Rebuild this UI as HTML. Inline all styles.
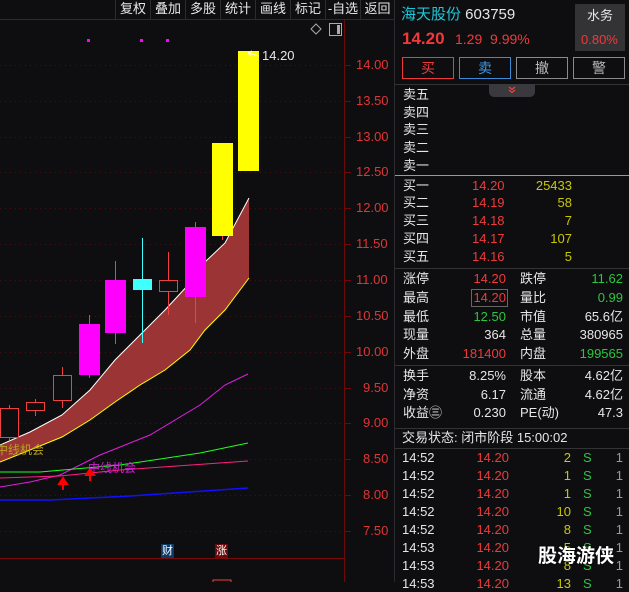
<!DOCTYPE html>
<html><head><meta charset="utf-8"><style>
*{margin:0;padding:0;box-sizing:border-box}
body{width:629px;height:582px;background:#0e0e11;overflow:hidden;position:relative;font-family:"Liberation Sans","Noto Sans CJK SC",sans-serif;font-size:13px;color:#e6e6e6}
.a{position:absolute;white-space:nowrap;line-height:16px}
.r{color:#f03a3a}.g{color:#2cc63c}.y{color:#c8c800}.w{color:#e6e6e6}.gr{color:#9a9a9a}
.tb{position:absolute;top:0;height:19px;line-height:18px;font-size:13px;color:#e6e6e6;border-left:1px solid #2c2c30;text-align:center}
.btn{position:absolute;top:57px;height:22px;width:52px;text-align:center;line-height:20px;font-size:14px}
.ax{position:absolute;left:356px;color:#e03535;font-size:13px;line-height:14px}
</style></head><body>
<div style="position:absolute;left:0;top:19px;width:394px;height:1px;background:#2c2c30"></div>
<div class="tb" style="left:115px;width:35px">复权</div>
<div class="tb" style="left:150px;width:35px">叠加</div>
<div class="tb" style="left:185px;width:35px">多股</div>
<div class="tb" style="left:220px;width:35px">统计</div>
<div class="tb" style="left:255px;width:35px">画线</div>
<div class="tb" style="left:290px;width:35px">标记</div>
<div class="tb" style="left:325px;width:35px">-自选</div>
<div class="tb" style="left:360px;width:34px">返回</div>
<div style="position:absolute;left:394px;top:0;width:1px;height:582px;background:#2c2c30"></div>

<svg style="position:absolute;left:0;top:0" width="394" height="582">
<g stroke="#4a1010" stroke-dasharray="1 4" stroke-width="1">
<line x1="0" y1="65.5" x2="344" y2="65.5"/><line x1="0" y1="101.5" x2="344" y2="101.5"/><line x1="0" y1="137.5" x2="344" y2="137.5"/><line x1="0" y1="172.5" x2="344" y2="172.5"/><line x1="0" y1="208.5" x2="344" y2="208.5"/><line x1="0" y1="244.5" x2="344" y2="244.5"/><line x1="0" y1="280.5" x2="344" y2="280.5"/><line x1="0" y1="316.5" x2="344" y2="316.5"/><line x1="0" y1="352.5" x2="344" y2="352.5"/><line x1="0" y1="388.5" x2="344" y2="388.5"/><line x1="0" y1="423.5" x2="344" y2="423.5"/><line x1="0" y1="459.5" x2="344" y2="459.5"/><line x1="0" y1="495.5" x2="344" y2="495.5"/><line x1="0" y1="531.5" x2="344" y2="531.5"/>
</g>
<line x1="344.5" y1="20" x2="344.5" y2="582" stroke="#6a0a0a"/>
<g stroke="#6a0a0a"><line x1="345" y1="65.5" x2="351" y2="65.5"/><line x1="345" y1="101.5" x2="351" y2="101.5"/><line x1="345" y1="137.5" x2="351" y2="137.5"/><line x1="345" y1="172.5" x2="351" y2="172.5"/><line x1="345" y1="208.5" x2="351" y2="208.5"/><line x1="345" y1="244.5" x2="351" y2="244.5"/><line x1="345" y1="280.5" x2="351" y2="280.5"/><line x1="345" y1="316.5" x2="351" y2="316.5"/><line x1="345" y1="352.5" x2="351" y2="352.5"/><line x1="345" y1="388.5" x2="351" y2="388.5"/><line x1="345" y1="423.5" x2="351" y2="423.5"/><line x1="345" y1="459.5" x2="351" y2="459.5"/><line x1="345" y1="495.5" x2="351" y2="495.5"/><line x1="345" y1="531.5" x2="351" y2="531.5"/></g>
<line x1="0" y1="558.5" x2="344" y2="558.5" stroke="#7a0a0a"/>
<path d="M316 24 L321 29 L316 34 L311 29 Z" fill="none" stroke="#aaa"/>
<rect x="329.5" y="23.5" width="12" height="12" fill="none" stroke="#aaa"/><rect x="337" y="25" width="3" height="9" fill="#aaa"/>
<rect x="87" y="39" width="3" height="3" fill="#f0f"/><rect x="140" y="39" width="3" height="3" fill="#f0f"/><rect x="166" y="39" width="3" height="3" fill="#f0f"/>
<path d="M0 445 L30 432 L62 415 L90 390 L115 360 L140 335 L165 310 L190 283 L205 262 L225 243 L249 198 L249 278 L225 310 L205 330 L190 350 L165 370 L140 385 L115 402 L90 420 L62 437 L30 450 L0 462 Z" fill="#9b3535"/>
<path d="M0 445 L30 432 L62 415 L90 390 L115 360 L140 335 L165 310 L190 283 L205 262 L225 243 L249 198" fill="none" stroke="#fff"/>
<path d="M0 462 L30 450 L62 437 L90 420 L115 402 L140 385 L165 370 L190 350 L205 330 L225 310 L249 278" fill="none" stroke="#ff0"/>
<path d="M0 487 L30 482 L60 475 L100 455 L150 435 L200 405 L225 385 L248 374" fill="none" stroke="#e020e0"/>
<path d="M0 472 L40 472 L120 465 L200 453 L248 443" fill="none" stroke="#20ff20"/>
<path d="M0 478 L60 476 L120 470 L248 461" fill="none" stroke="#ff2080"/>
<path d="M0 500 L50 500 L130 496 L248 488" fill="none" stroke="#1010ff" stroke-width="1.5"/>
<g stroke="#f04040" fill="none">
<line x1="9.5" y1="405" x2="9.5" y2="440"/><rect x="0.5" y="408.5" width="18" height="29" fill="#0e0e11"/>
<line x1="35.5" y1="399" x2="35.5" y2="416"/><rect x="26.5" y="402.5" width="18" height="8" fill="#0e0e11"/>
<line x1="62.5" y1="367" x2="62.5" y2="408"/><rect x="53.5" y="375.5" width="18" height="25" fill="#0e0e11"/>
<line x1="89.5" y1="315" x2="89.5" y2="378"/><line x1="115.5" y1="261" x2="115.5" y2="344"/>
<line x1="168.5" y1="252" x2="168.5" y2="315"/><rect x="159.5" y="280.5" width="18" height="11" fill="#0e0e11"/>
<line x1="195.5" y1="222" x2="195.5" y2="323"/><line x1="222.5" y1="230" x2="222.5" y2="240"/>
</g>
<rect x="79" y="324" width="21" height="51" fill="#f0f"/>
<rect x="105" y="280" width="21" height="53" fill="#f0f"/>
<line x1="142.5" y1="238" x2="142.5" y2="343" stroke="#40ffff"/>
<rect x="133" y="279" width="19" height="11" fill="#40ffff"/>
<rect x="185" y="227" width="21" height="70" fill="#f0f"/>
<rect x="212" y="143" width="21" height="93" fill="#ff0"/>
<rect x="238" y="51" width="21" height="120" fill="#ff0"/>
<path d="M248 53 L259 56 M248 53 L252 51 M248 53 L251 56" stroke="#fff" fill="none"/>
<path d="M63 490 V482 M59 484 L63 478 L67 484 Z" stroke="#f00" stroke-width="2" fill="#f00"/>
<path d="M90 481 V473 M86 475 L90 469 L94 475 Z" stroke="#f00" stroke-width="2" fill="#f00"/>
<rect x="213" y="580" width="18" height="4" fill="none" stroke="#f04040"/>
</svg>
<div class="a" style="left:262px;top:48px;color:#e6e6e6;font-size:13px">14.20</div>
<div class="a" style="left:-4px;top:442px;color:#b8a020;font-size:12px">中线机会</div>
<div class="a" style="left:88px;top:460px;color:#d020d0;font-size:12px">中线机会</div>
<div class="a" style="left:161px;top:544px;width:13px;height:14px;background:#0a3a6a;color:#fff;font-size:11px;line-height:14px;text-align:center">财</div>
<div class="a" style="left:215px;top:544px;width:13px;height:14px;background:#6a0a0a;color:#fff;font-size:11px;line-height:14px;text-align:center">涨</div>

<div class="ax" style="top:58px">14.00</div><div class="ax" style="top:94px">13.50</div><div class="ax" style="top:130px">13.00</div><div class="ax" style="top:165px">12.50</div><div class="ax" style="top:201px">12.00</div><div class="ax" style="top:237px">11.50</div><div class="ax" style="top:273px">11.00</div><div class="ax" style="top:309px">10.50</div><div class="ax" style="top:345px">10.00</div><div class="ax" style="top:381px;left:363px">9.50</div><div class="ax" style="top:416px;left:363px">9.00</div><div class="ax" style="top:452px;left:363px">8.50</div><div class="ax" style="top:488px;left:363px">8.00</div><div class="ax" style="top:524px;left:363px">7.50</div>

<div class="a" style="left:401px;top:6px;font-size:15px;line-height:18px"><span style="color:#1cc8d8">海天股份</span> 603759</div>
<div class="a r" style="left:402px;top:29px;font-size:17px;font-weight:bold;line-height:20px">14.20</div>
<div class="a r" style="left:455px;top:31px;font-size:14px">1.29&nbsp; 9.99%</div>
<div style="position:absolute;left:575px;top:4px;width:50px;height:47px;background:#333336"></div>
<div class="a" style="left:587px;top:8px;font-size:13px">水务</div>
<div class="a r" style="left:581px;top:32px;font-size:13px">0.80%</div>
<div class="btn r" style="left:402px;border:1px solid #f03a3a">买</div>
<div class="btn" style="left:459px;border:1px solid #3a8ad8;color:#3a9ae8">卖</div>
<div class="btn gr" style="left:516px;border:1px solid #8a8a8a;color:#bbb">撤</div>
<div class="btn gr" style="left:573px;border:1px solid #8a8a8a;color:#bbb">警</div>
<div style="position:absolute;left:395px;top:84px;width:234px;height:1px;background:#333"></div>
<div style="position:absolute;left:489px;top:84px;width:46px;height:13px;background:#3a3a3e;border-radius:0 0 5px 5px"></div>
<svg style="position:absolute;left:507px;top:85px" width="10" height="10"><path d="M2 2 L5 4.5 L8 2 M2 5 L5 7.5 L8 5" fill="none" stroke="#f04040" stroke-width="1.2"/></svg>

<div class="a" style="left:403px;top:87px">卖五</div>
<div class="a" style="left:403px;top:105px">卖四</div>
<div class="a" style="left:403px;top:122px">卖三</div>
<div class="a" style="left:403px;top:140px">卖二</div>
<div class="a" style="left:403px;top:158px">卖一</div>
<div style="position:absolute;left:395px;top:175px;width:234px;height:1px;background:#c8962a"></div>
<div class="a" style="left:403px;top:178px">买一</div><div class="a r" style="left:472px;top:178px">14.20</div><div class="a y" style="right:57px;top:178px">25433</div>
<div class="a" style="left:403px;top:195px">买二</div><div class="a r" style="left:472px;top:195px">14.19</div><div class="a y" style="right:57px;top:195px">58</div>
<div class="a" style="left:403px;top:213px">买三</div><div class="a r" style="left:472px;top:213px">14.18</div><div class="a y" style="right:57px;top:213px">7</div>
<div class="a" style="left:403px;top:231px">买四</div><div class="a r" style="left:472px;top:231px">14.17</div><div class="a y" style="right:57px;top:231px">107</div>
<div class="a" style="left:403px;top:249px">买五</div><div class="a r" style="left:472px;top:249px">14.16</div><div class="a y" style="right:57px;top:249px">5</div>
<div style="position:absolute;left:395px;top:268px;width:234px;height:1px;background:#333"></div>

<div class="a" style="left:403px;top:271px">涨停</div><div class="a r" style="right:123px;top:271px">14.20</div><div class="a" style="left:520px;top:271px">跌停</div><div class="a g" style="right:6px;top:271px">11.62</div>
<div class="a" style="left:403px;top:290px">最高</div><div class="a r" style="right:121px;top:289px;border:1px solid #666;padding:0 1px">14.20</div><div class="a" style="left:520px;top:290px">量比</div><div class="a g" style="right:6px;top:290px">0.99</div>
<div class="a" style="left:403px;top:309px">最低</div><div class="a g" style="right:123px;top:309px">12.50</div><div class="a" style="left:520px;top:309px">市值</div><div class="a" style="right:6px;top:309px">65.6亿</div>
<div class="a" style="left:403px;top:327px">现量</div><div class="a" style="right:123px;top:327px">364</div><div class="a" style="left:520px;top:327px">总量</div><div class="a" style="right:6px;top:327px">380965</div>
<div class="a" style="left:403px;top:346px">外盘</div><div class="a r" style="right:123px;top:346px">181400</div><div class="a" style="left:520px;top:346px">内盘</div><div class="a g" style="right:6px;top:346px">199565</div>
<div style="position:absolute;left:395px;top:365px;width:234px;height:1px;background:#333"></div>
<div class="a" style="left:403px;top:368px">换手</div><div class="a" style="right:123px;top:368px">8.25%</div><div class="a" style="left:520px;top:368px">股本</div><div class="a" style="right:6px;top:368px">4.62亿</div>
<div class="a" style="left:403px;top:387px">净资</div><div class="a" style="right:123px;top:387px">6.17</div><div class="a" style="left:520px;top:387px">流通</div><div class="a" style="right:6px;top:387px">4.62亿</div>
<div class="a" style="left:403px;top:405px">收益㊂</div><div class="a" style="right:123px;top:405px">0.230</div><div class="a" style="left:520px;top:405px">PE(动)</div><div class="a" style="right:6px;top:405px">47.3</div>
<div style="position:absolute;left:395px;top:428px;width:234px;height:1px;background:#333"></div>
<div class="a" style="left:402px;top:430px">交易状态: 闭市阶段 15:00:02</div>
<div style="position:absolute;left:395px;top:448px;width:234px;height:1px;background:#333"></div>

<div class="a" style="left:402px;top:450px">14:52</div><div class="a r" style="right:120px;top:450px">14.20</div><div class="a y" style="right:58px;top:450px">2</div><div class="a g" style="left:583px;top:450px">S</div><div class="a gr" style="right:6px;top:450px">1</div>
<div class="a" style="left:402px;top:468px">14:52</div><div class="a r" style="right:120px;top:468px">14.20</div><div class="a y" style="right:58px;top:468px">1</div><div class="a g" style="left:583px;top:468px">S</div><div class="a gr" style="right:6px;top:468px">1</div>
<div class="a" style="left:402px;top:486px">14:52</div><div class="a r" style="right:120px;top:486px">14.20</div><div class="a y" style="right:58px;top:486px">1</div><div class="a g" style="left:583px;top:486px">S</div><div class="a gr" style="right:6px;top:486px">1</div>
<div class="a" style="left:402px;top:504px">14:52</div><div class="a r" style="right:120px;top:504px">14.20</div><div class="a y" style="right:58px;top:504px">10</div><div class="a g" style="left:583px;top:504px">S</div><div class="a gr" style="right:6px;top:504px">1</div>
<div class="a" style="left:402px;top:522px">14:52</div><div class="a r" style="right:120px;top:522px">14.20</div><div class="a y" style="right:58px;top:522px">8</div><div class="a g" style="left:583px;top:522px">S</div><div class="a gr" style="right:6px;top:522px">1</div>
<div class="a" style="left:402px;top:540px">14:53</div><div class="a r" style="right:120px;top:540px">14.20</div><div class="a y" style="right:58px;top:540px">5</div><div class="a g" style="left:583px;top:540px">S</div><div class="a gr" style="right:6px;top:540px">1</div>
<div class="a" style="left:402px;top:558px">14:53</div><div class="a r" style="right:120px;top:558px">14.20</div><div class="a y" style="right:58px;top:558px">8</div><div class="a g" style="left:583px;top:558px">S</div><div class="a gr" style="right:6px;top:558px">1</div>
<div class="a" style="left:402px;top:576px">14:53</div><div class="a r" style="right:120px;top:576px">14.20</div><div class="a y" style="right:58px;top:576px">13</div><div class="a g" style="left:583px;top:576px">S</div><div class="a gr" style="right:6px;top:576px">1</div>
<div class="a" style="left:538px;top:545px;font-size:19px;font-weight:bold;line-height:24px;color:#fff;text-shadow:0 0 2px #000">股海游侠</div>
</body></html>
